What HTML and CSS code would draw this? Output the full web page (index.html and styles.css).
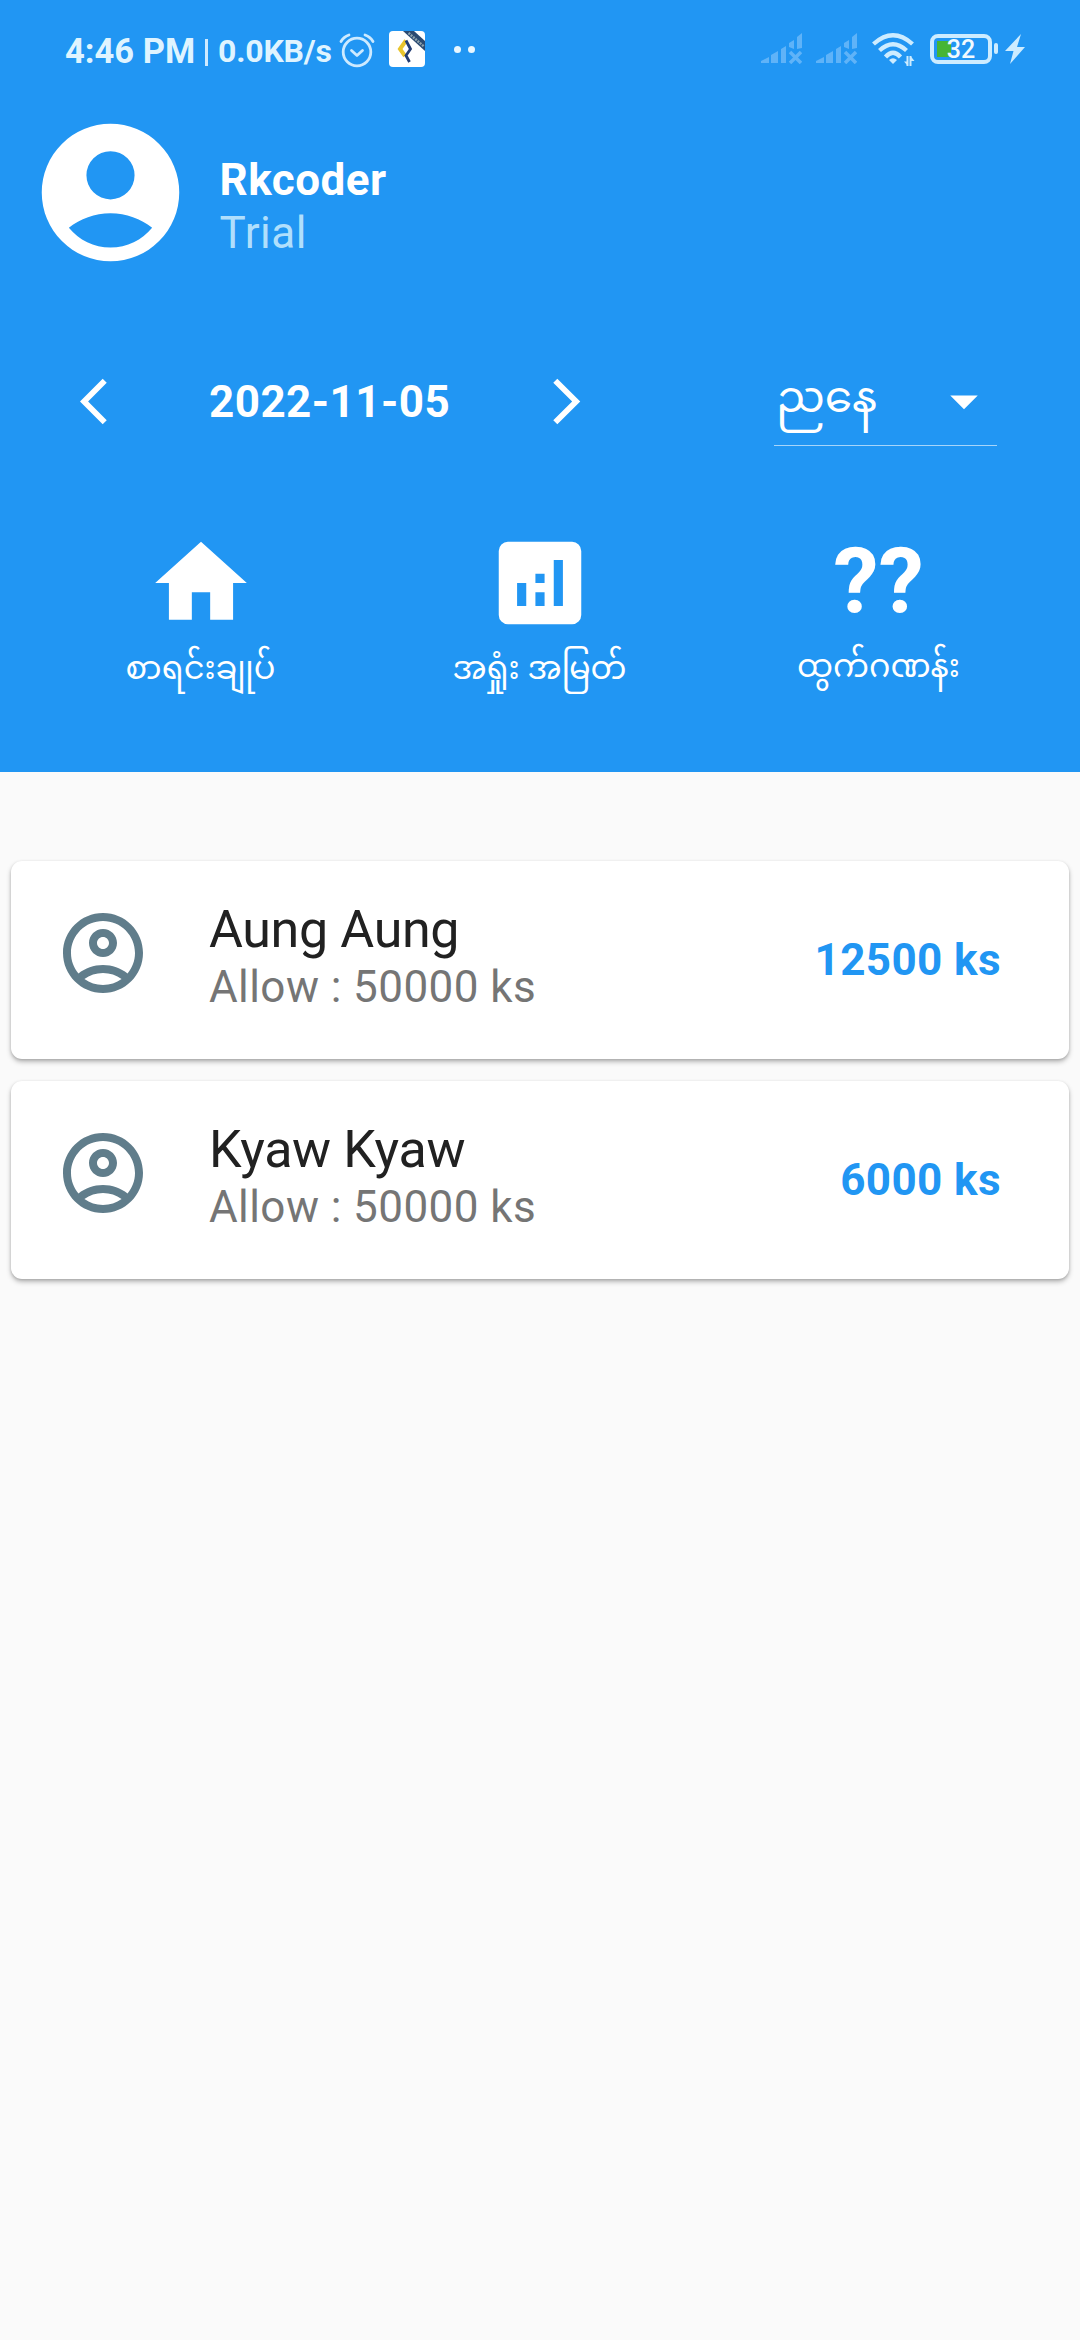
FILE: index.html
```html
<!DOCTYPE html>
<html lang="my">
<head>
<meta charset="utf-8">
<title>Rkcoder</title>
<link rel="stylesheet" href="styles.css">
</head>
<body>
<header class="header">
  <div class="statusbar">
    <span class="clock">4:46 PM</span>
    <span class="divider"></span>
    <span class="speed">0.0KB/s</span>
    <svg class="alarm" viewBox="0 0 36 36" fill="none" stroke="currentColor" stroke-width="2.8" stroke-linecap="round" stroke-linejoin="round"><circle cx="18" cy="20" r="13.8"/><path d="M12.5 18.5l5.5 5 5.5-5M2 9.500Q4.500 5 10 3M34 9.500Q31.500 5 26 3"/></svg>
    <svg class="app" viewBox="0 0 36 36"><rect width="36" height="36" rx="4" fill="#fff"/><path d="M14 0H25L36 10V20z" fill="#2a4a72"/><path d="M19.500 2L35 15.500" stroke="#8fa3ad" stroke-width="2.500" stroke-dasharray="2 1"/><path d="M17 9.500L11 18l5 7" fill="none" stroke="#e9c52d" stroke-width="4"/><path d="M17 9.500L21.500 18 17 24.500l3.500 6.500" fill="none" stroke="#233d74" stroke-width="2.800"/></svg>
    <span class="dots"><i></i><i></i></span>
    <div class="indicators">
      <svg class="signal" viewBox="0 0 41 31" fill="currentColor"><path d="M0 30v-2l8-4v6zM10 22l7-4v12h-7zM20 16l5-3v17h-5zM28 10l5-3v9l-5-2zM36 4l5-4v15l-5 1z"/><path d="M29 19l11 11M40 19L29 30" stroke="currentColor" stroke-width="3.500"/></svg>
      <svg class="signal" viewBox="0 0 41 31" fill="currentColor"><path d="M0 30v-2l8-4v6zM10 22l7-4v12h-7zM20 16l5-3v17h-5zM28 10l5-3v9l-5-2zM36 4l5-4v15l-5 1z"/><path d="M29 19l11 11M40 19L29 30" stroke="currentColor" stroke-width="3.500"/></svg>
      <svg class="wifi" viewBox="0 0 43 34" fill="none" stroke="currentColor" stroke-width="4.300"><path d="M1.500 11Q21 -6.500 40.500 11M7.500 17.500Q21 5 34.500 17.500M13.500 24Q21 15.500 28.500 24"/><path d="M17 27Q21 23.500 25 27L21 31z" fill="currentColor" stroke="none"/><path d="M35.500 23v10M38.500 23v10" stroke-width="2"/><path d="M32 28.500h3.500v4zM38.500 23l4 5h-4z" fill="currentColor" stroke="none"/></svg>
      <span class="battery"><span class="cell">32</span><i class="nub"></i></span>
      <svg class="bolt" viewBox="0 0 20 30" fill="currentColor"><path d="M16 0L0 17h8.500L5 30 20 13h-8z"/></svg>
    </div>
  </div>

  <div class="profile">
    <svg class="avatar" viewBox="0 0 24 24" fill="currentColor" fill-rule="evenodd"><path d="M12 2a10 10 0 1 0 0 20 10 10 0 0 0 0-20zM12 6a3.500 3.500 0 1 1 0 7 3.500 3.500 0 0 1 0-7zM5.940 17.120C7.600 15.800 9.700 15 12 15s4.400.8 6.060 2.120C16.600 18.900 14.400 20 12 20s-4.600-1.100-6.060-2.880z"/></svg>
    <div class="who"><div class="name">Rkcoder</div><div class="plan">Trial</div></div>
  </div>

  <div class="filters">
    <svg class="chevron" viewBox="0 0 24 24" fill="currentColor"><path d="M11.670 3.870L9.900 2.100 0 12l9.900 9.900 1.770-1.770L3.540 12z"/></svg>
    <span class="date">2022-11-05</span>
    <svg class="chevron" viewBox="0 0 24 24" fill="currentColor"><path d="M6.230 20.130L8 21.900 18 12 8 2.100 6.230 3.870 14.460 12z"/></svg>
    <div class="select"><span class="value">ညနေ</span><svg class="caret" viewBox="0 0 24 24" fill="currentColor"><path d="M7 10l5 5 5-5z"/></svg></div>
  </div>

  <nav class="tabs">
    <div class="tab"><svg class="icon" viewBox="0 0 24 24" fill="currentColor"><path d="M10 20v-6h4v6h5v-8h3L12 3 2 12h3v8z"/></svg><span class="label">စာရင်းချုပ်</span></div>
    <div class="tab"><svg class="icon" viewBox="0 0 24 24" fill="currentColor"><path fill-rule="evenodd" d="M19 3H5a2 2 0 0 0-2 2v14a2 2 0 0 0 2 2h14a2 2 0 0 0 2-2V5a2 2 0 0 0-2-2zM7 12h2v5H7zM11 14h2v3h-2zM11 10h2v2h-2zM15 7h2v10h-2z"/></svg><span class="label">အရှုံး အမြတ်</span></div>
    <div class="tab"><span class="marks">??</span><span class="label last">ထွက်ဂဏန်း</span></div>
  </nav>
</header>

<main class="list">
  <article class="card">
    <svg class="user" viewBox="0 0 24 24" fill="currentColor"><path d="M12 2C6.480 2 2 6.480 2 12s4.480 10 10 10 10-4.480 10-10S17.520 2 12 2zM7.350 18.500C8.660 17.560 10.260 17 12 17s3.340.56 4.650 1.500c-1.310.94-2.910 1.500-4.650 1.500s-3.340-.56-4.650-1.500zm10.790-1.380C16.450 15.800 14.320 15 12 15s-4.450.8-6.140 2.120C4.700 15.730 4 13.950 4 12c0-4.420 3.580-8 8-8s8 3.580 8 8c0 1.950-.7 3.730-1.860 5.120zM12 6c-1.930 0-3.500 1.570-3.500 3.500S10.070 13 12 13s3.500-1.570 3.500-3.500S13.930 6 12 6zm0 5c-.83 0-1.500-.67-1.500-1.500S11.170 8 12 8s1.500.67 1.500 1.500S12.830 11 12 11z"/></svg>
    <div class="info"><div class="title">Aung Aung</div><div class="sub">Allow : 50000 ks</div></div>
    <div class="amount">12500 ks</div>
  </article>
  <article class="card">
    <svg class="user" viewBox="0 0 24 24" fill="currentColor"><path d="M12 2C6.480 2 2 6.480 2 12s4.480 10 10 10 10-4.480 10-10S17.520 2 12 2zM7.350 18.500C8.660 17.560 10.260 17 12 17s3.340.56 4.650 1.500c-1.310.94-2.910 1.500-4.650 1.500s-3.340-.56-4.650-1.500zm10.790-1.380C16.450 15.800 14.320 15 12 15s-4.450.8-6.140 2.120C4.700 15.730 4 13.950 4 12c0-4.420 3.580-8 8-8s8 3.580 8 8c0 1.950-.7 3.730-1.860 5.120zM12 6c-1.930 0-3.500 1.570-3.500 3.500S10.070 13 12 13s3.500-1.570 3.500-3.500S13.930 6 12 6zm0 5c-.83 0-1.500-.67-1.500-1.500S11.170 8 12 8s1.500.67 1.500 1.500S12.830 11 12 11z"/></svg>
    <div class="info"><div class="title">Kyaw Kyaw</div><div class="sub">Allow : 50000 ks</div></div>
    <div class="amount">6000 ks</div>
  </article>
</main>
</body>
</html>
```

FILE: styles.css
```css
* { box-sizing: border-box; }
body {
  margin: 0;
  min-height: 2340px;
  background: #fafafa;
  font-family: Roboto, "Noto Sans Myanmar", "Noto Sans", sans-serif;
  font-size: 44px;
}
svg { display: block; flex: none; }

.header {
  height: 772px;
  background: #2196f3;
  color: #fff;
  white-space: nowrap;
}

.statusbar {
  display: flex;
  align-items: center;
  height: 100px;
  padding: 0 55px 0 65px;
  color: #dff4ff;
  font-weight: 700;
}
.clock { width: 129px; margin-top: 1px; font-size: 34.500px; line-height: 40px; }
.divider { width: 3px; height: 27px; margin: 5px 0 0 11px; background: #cfeaff; }
.speed { width: 113px; margin: 2px 0 0 10px; font-size: 32px; line-height: 38px; letter-spacing: -.2px; }
.alarm { width: 36px; height: 36px; margin-left: 8px; color: #cdeaff; }
.app { width: 36px; height: 36px; margin: -2px 0 0 14px; }
.dots { display: flex; gap: 7px; margin: -2px 0 0 29px; }
.dots i { width: 7px; height: 7px; border-radius: 50%; background: #e8f7ff; }
.indicators { display: flex; align-items: center; height: 32px; margin: -3px 0 0 auto; color: #cdecff; }
.signal { width: 41px; height: 31px; margin-right: 14px; color: #5fb3f8; }
.wifi { width: 43px; height: 34px; margin: 3px 15px 0 1px; }
.battery { display: flex; align-items: center; gap: 2px; }
.cell {
  width: 62px;
  height: 30px;
  border: 4px solid #cdecff;
  border-radius: 8px;
  background: linear-gradient(#46b535, #46b535) 3px 3px / 14px 16px no-repeat;
  color: #f0faff;
  font-size: 25px;
  font-weight: 500;
  line-height: 24px;
  text-align: center;
}
.nub { width: 4px; height: 11px; border-radius: 2px; background: #cdecff; }
.bolt { width: 20px; height: 30px; margin-left: 7px; }

.profile { display: flex; height: 175px; padding: 10px 0 0 27.5px; }
.avatar { width: 165px; height: 165px; }
.who { margin: 43.500px 0 0 27px; line-height: 53px; }
.name { font-weight: 700; letter-spacing: .5px; }
.plan { color: #b0dffc; letter-spacing: .5px; }

.filters { display: flex; align-items: center; height: 110px; margin-top: 71.500px; padding-left: 80px; }
.chevron { width: 55px; height: 55px; }
.date { width: 404px; padding-left: 74px; font-weight: 700; letter-spacing: .45px; }
.select {
  display: flex;
  justify-content: space-between;
  align-items: center;
  align-self: flex-start;
  width: 223px;
  height: 99px;
  margin-left: 180px;
  border-bottom: 1px solid #a6d5fa;
}
.value { padding: 3px 0 0 2px; line-height: 60px; }
.caret { width: 66px; height: 66px; margin-top: 11px; }

.tabs { display: grid; grid-template-columns: repeat(3, 339px); margin: 71px 0 0 31px; }
.tab { display: flex; flex-direction: column; align-items: center; }
.icon { width: 110px; height: 110px; }
.marks { height: 110px; font-size: 91px; font-weight: 700; line-height: 107px; }
.label { font-size: 32px; line-height: 60px; }
.last { margin-top: -2px; }

.list { display: flex; flex-direction: column; gap: 22px; padding: 89px 11px 0; }
.card {
  display: flex;
  align-items: center;
  height: 198px;
  padding: 0 68px 0 44px;
  border-radius: 11px;
  background: #fff;
  box-shadow: 0 3px 5px rgba(0, 0, 0, .25), 0 1px 3px rgba(0, 0, 0, .15);
}
.user { width: 96px; height: 96px; margin-top: -14px; color: #607d8b; }
.info { margin: -3px 0 0 58px; }
.title { color: #212121; font-size: 52px; line-height: 56px; letter-spacing: -.35px; }
.sub { padding-top: 1px; color: #757575; line-height: 56px; letter-spacing: .42px; }
.amount { margin: 0 0 0 auto; color: #2196f3; font-weight: 700; letter-spacing: .4px; }
```
